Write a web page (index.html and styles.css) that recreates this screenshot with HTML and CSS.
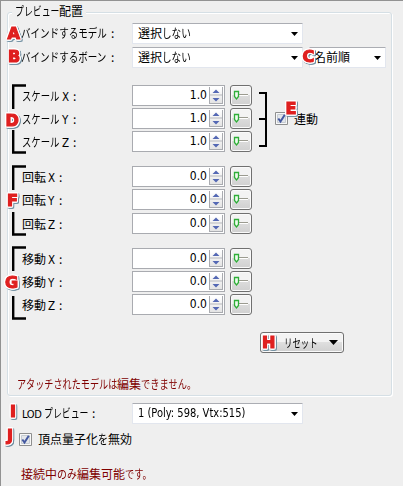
FILE: index.html
```html
<!DOCTYPE html>
<html lang="ja">
<head>
<meta charset="utf-8">
<title>プレビュー配置</title>
<link rel="stylesheet" href="styles.css">
</head>
<body>
<svg class="defs" width="0" height="0">
  <defs>
    <linearGradient id="face" x1="0" y1="0" x2="0" y2="1"><stop offset="0" stop-color="#fff"/><stop offset="1" stop-color="#e4e4e4"/></linearGradient>
    <symbol id="spin" viewBox="0 0 14 17">
      <path d="M.5 0V17M13.500 0V17M0 8H14M0 16.500H14" stroke="#a9abb0" fill="none"/>
      <path d="M1 1H13V7H1zM1 9H13V16H1z" fill="url(#face)"/>
      <path d="M3.500 6L7 2.500L10.500 6zM3.500 11L7 14.500L10.500 11z" fill="#5468b4"/>
    </symbol>
    <symbol id="slider" viewBox="0 0 16 12">
      <path d="M5 4.500H15" stroke="#9b9b90" />
      <path d="M5 5.500H15" stroke="#fff"/>
      <path d="M1.500 1.500H5.500V6.500L3.500 9L1.500 6.500z" fill="#eefbee" stroke="#2fae38" stroke-width="1.300"/>
    </symbol>
    <symbol id="check" viewBox="0 0 13 13">
      <path d="M.5 .5H12.500V12.500H.5z" fill="#f8f8f8" stroke="#8e8f8f"/>
      <path d="M2.500 2.500H10.500V10.500H2.500z" fill="#e3e6ea" stroke="#c5cbd2"/>
      <path d="M3.300 6.500L5.500 9.500L9.800 2.800" fill="none" stroke="#4358a0" stroke-width="2"/>
    </symbol>
  </defs>
</svg>
<main class="panel">
  <section class="group">
    <h1 class="legend"><span class="fit preview">プレビュー</span>配置</h1>
    <div class="row pick">
      <label class="label"><span class="fit bind">バインドするモデル</span><span class="colon">:</span></label>
      <div class="select">選択<span class="fit shinai">しない</span><i class="arrow"></i></div>
    </div>
    <div class="row pick">
      <label class="label"><span class="fit bind">バインドするボーン</span><span class="colon">:</span></label>
      <div class="select">選択<span class="fit shinai">しない</span><i class="arrow"></i></div>
      <div class="select order">名前順<i class="arrow"></i></div>
    </div>
    <div class="axes scale">
      <div class="row"><label class="label"><span class="fit sc">スケール</span><b class="axis">X</b>:</label><div class="spin">1.0<svg><use href="#spin"/></svg></div><button class="tool"><svg><use href="#slider"/></svg></button></div>
      <div class="row"><label class="label"><span class="fit sc">スケール</span><b class="axis">Y</b>:</label><div class="spin">1.0<svg><use href="#spin"/></svg></div><button class="tool"><svg><use href="#slider"/></svg></button><label class="link"><svg class="box"><use href="#check"/></svg>連動</label></div>
      <div class="row"><label class="label"><span class="fit sc">スケール</span><b class="axis">Z</b>:</label><div class="spin">1.0<svg><use href="#spin"/></svg></div><button class="tool"><svg><use href="#slider"/></svg></button></div>
    </div>
    <div class="axes rotate">
      <div class="row"><label class="label">回転<b class="axis">X</b>:</label><div class="spin">0.0<svg><use href="#spin"/></svg></div><button class="tool"><svg><use href="#slider"/></svg></button></div>
      <div class="row"><label class="label">回転<b class="axis">Y</b>:</label><div class="spin">0.0<svg><use href="#spin"/></svg></div><button class="tool"><svg><use href="#slider"/></svg></button></div>
      <div class="row"><label class="label">回転<b class="axis">Z</b>:</label><div class="spin">0.0<svg><use href="#spin"/></svg></div><button class="tool"><svg><use href="#slider"/></svg></button></div>
    </div>
    <div class="axes move">
      <div class="row"><label class="label">移動<b class="axis">X</b>:</label><div class="spin">0.0<svg><use href="#spin"/></svg></div><button class="tool"><svg><use href="#slider"/></svg></button></div>
      <div class="row"><label class="label">移動<b class="axis">Y</b>:</label><div class="spin">0.0<svg><use href="#spin"/></svg></div><button class="tool"><svg><use href="#slider"/></svg></button></div>
      <div class="row"><label class="label">移動<b class="axis">Z</b>:</label><div class="spin">0.0<svg><use href="#spin"/></svg></div><button class="tool"><svg><use href="#slider"/></svg></button></div>
    </div>
    <button class="reset"><span class="fit rs">リセット</span><i class="arrow"></i></button>
    <p class="note"><span class="fit attach">アタッチされたモデルは</span>編集<span class="fit cannot">できません。</span></p>
  </section>
  <div class="row lod">
    <label class="label"><span class="word">LOD</span><span class="fit preview">プレビュー</span><span class="colon">:</span></label>
    <div class="select poly"><span class="fit stats">1 (Poly: 598, Vtx:515)</span><i class="arrow"></i></div>
  </div>
  <label class="quant"><svg class="box"><use href="#check"/></svg>頂点量子化<span class="fit wo">を</span>無効</label>
  <p class="note online">接続中<span class="fit nomi">のみ</span>編集可能<span class="fit desu">です。</span></p>
</main>
<svg class="marks" viewBox="0 0 403 486">
  <g class="bracket">
    <path d="M26 85.500H13.200V109M13.200 130V152.500H26"/>
    <path d="M26 166.500H13.200V190M13.200 212V234.500H26"/>
    <path d="M26 247.500H13.200V271M13.200 296V318.500H26"/>
    <path d="M259 93H266V146H259M259 119H266" class="thin"/>
  </g>
  <g class="letter">
    <text x="7.500" y="38.500">A</text><text x="8" y="62">B</text><text x="302.500" y="62">C</text><text x="5.500" y="125.500">D</text><text x="285.500" y="113.500">E</text>
    <text x="7" y="205.500">F</text><text x="5" y="288">G</text><text x="262" y="348">H</text><text x="10" y="417">I</text><text x="7" y="441">J</text>
  </g>
</svg>
</body>
</html>
```
FILE: styles.css
```css
* { box-sizing: border-box; }
body {
  margin: 0;
  background: #efefef;
  color: #000;
  font: 12px/20px "Noto Sans CJK JP", sans-serif;
  white-space: nowrap;
}
.defs { display: block; height: 0; }
.panel {
  width: 403px;
  height: 486px;
  border-top: 1px solid #929292;
  border-left: 1px solid #929292;
  overflow: hidden;
}
.group {
  width: 385px;
  height: 384px;
  margin: 11px 0 0 6px;
  border: 1px solid #d5dfe5;
  border-radius: 3px;
  box-shadow: inset 1px 1px #fff, 1px 1px #fff;
}
.legend {
  width: max-content;
  height: 20px;
  margin: -12px 0 2px 4px;
  padding: 0 3px;
  background: #efefef;
  font-size: 12px;
  font-weight: 400;
}
.fit { display: inline-block; transform: scaleX(var(--s)); transform-origin: 0 50%; width: var(--w); }
.preview { --w: 44px; --s: .74; }
.bind { --w: 86px; --s: .795; }
.shinai { --w: 30px; --s: .8; }
.sc { --w: 38px; --s: .78; }
.rs { --w: 33px; --s: .7; }
.attach { --w: 100px; --s: .76; }
.cannot { --w: 54px; --s: .77; }
.wo { --w: 10px; --s: .83; }
.nomi { --w: 20px; --s: .83; }
.desu { --w: 27px; --s: .77; }
.stats { --w: 110px; --s: .92; }
.row { display: flex; height: 21px; }
.group .row { padding-left: 13px; }
.pick { margin-bottom: 3px; }
.label { width: 111px; flex: none; }
.axes .label { padding: 1px 0 0 1px; }
.colon { margin-left: 4px; }
.axis {
  display: inline-block;
  width: 12px;
  padding-left: 2px;
  margin-right: 1px;
  font: 11.5px "DejaVu Sans Condensed", sans-serif;
}
.select {
  display: flex;
  align-items: center;
  width: 171px;
  height: 21px;
  padding: 0 5px 1px 5px;
  border: 1px solid #e2e6ee;
  border-top-color: #abadb3;
  border-radius: 1px;
  background: #fff;
}
.order { width: 77px; margin-left: 6px; }
.arrow {
  width: 7px;
  height: 4px;
  margin-left: auto;
  margin-top: 2px;
  background: #000;
  clip-path: polygon(0 0, 100% 0, 50% 100%);
}
.select .arrow { margin-right: -1px; }
.order { padding-left: 4px; }
.axes { display: grid; gap: 2px; }
.scale { margin-top: 17px; }
.rotate { margin-top: 14px; }
.rotate .row:last-child { margin-top: 1px; }
.move { margin-top: 14px; }
.spin {
  display: flex;
  justify-content: flex-end;
  width: 93px;
  height: 21px;
  padding: 1px;
  border: 1px solid #a9abb0;
  background: #fff;
  font: 12px/17px "DejaVu Sans Condensed", sans-serif;
}
.spin svg { width: 14px; height: 17px; margin-left: 2px; }
.tool {
  display: block;
  width: 22px;
  height: 21px;
  margin-left: 5px;
  padding: 4px 2px;
  border: 1px solid #707070;
  border-radius: 3px;
  background: linear-gradient(#f3f3f3 45%, #dcdcdc 50%, #d0d0d0);
  box-shadow: inset 0 0 0 1px #fafafa;
}
.tool svg { display: block; width: 16px; height: 12px; }
.box { width: 13px; height: 13px; flex: none; margin-right: 6px; }
.link { display: flex; align-items: center; margin-left: 23px; }
.reset {
  display: flex;
  align-items: center;
  width: 84px;
  height: 21px;
  margin: 17px 0 0 252px;
  padding: 0 5px 0 23px;
  border: 1px solid #707070;
  border-radius: 3px;
  background: linear-gradient(#f3f3f3 45%, #dfdfdf 50%, #d0d0d0);
  box-shadow: inset 0 0 0 1px #fafafa;
  font: inherit;
}
.reset .arrow { width: 9px; height: 5px; margin-top: 0; }
.note { margin: 21px 0 0 9px; color: #800000; }
.lod { margin-top: 7px; padding-left: 21px; }
.lod .label { width: 110px; }
.word { display: inline-block; width: 22px; font: 11px "DejaVu Sans Condensed", sans-serif; letter-spacing: -.3px; }
.poly { font: 12px "DejaVu Sans Condensed", sans-serif; }
.quant { display: flex; align-items: center; height: 20px; margin: 5px 0 0 18px; }
.online { margin: 15px 0 0 20px; }
.marks { position: absolute; top: 0; left: 0; width: 403px; height: 486px; }
.bracket { fill: none; stroke: #000; stroke-width: 2.4; }
.bracket .thin { stroke-width: 2; }
.letter {
  font: 700 16px "DejaVu Sans", sans-serif;
  fill: #df2020;
  stroke: #df2020;
  stroke-width: 1.2px;
  filter: drop-shadow(1px 0 0 #fff) drop-shadow(-1px 0 0 #fff) drop-shadow(0 1px 0 #fff) drop-shadow(0 -1px 0 #fff) drop-shadow(1.5px 1.5px .6px #6f8ea0);
}
```
